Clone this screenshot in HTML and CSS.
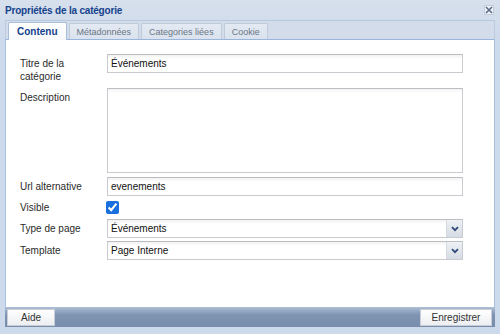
FILE: index.html
```html
<!DOCTYPE html>
<html lang="fr">
<head>
<meta charset="utf-8">
<title>Propriétés de la catégorie</title>
<link rel="stylesheet" href="styles.css">
</head>
<body>
<div class="window">
  <div class="titlebar">
    <span class="title">Propriétés de la catégorie</span>
    <span class="close">
      <svg width="8" height="8" viewBox="0 0 8 8"><path d="M1 1L7 7M7 1L1 7" stroke="#5b6b85" stroke-width="1.6"/></svg>
    </span>
  </div>
  <div class="tabstrip">
    <div class="tab active">Contenu</div>
    <div class="tab">Métadonnées</div>
    <div class="tab">Categories liées</div>
    <div class="tab">Cookie</div>
  </div>
  <div class="panel">
    <div class="row row-title">
      <label class="lbl">Titre de la catégorie</label>
      <div class="field">Événements</div>
    </div>
    <div class="row row-desc">
      <label class="lbl">Description</label>
      <div class="field area"></div>
    </div>
    <div class="row">
      <label class="lbl">Url alternative</label>
      <div class="field">evenements</div>
    </div>
    <div class="row row-check">
      <label class="lbl">Visible</label>
      <input class="check" type="checkbox" checked>
    </div>
    <div class="row">
      <label class="lbl">Type de page</label>
      <div class="field select"><span class="val">Événements</span><span class="arrow"><svg width="8" height="6" viewBox="0 0 8 6"><path d="M1 1.2L4 4.2L7 1.2" fill="none" stroke="#2f4a7a" stroke-width="1.8"/></svg></span></div>
    </div>
    <div class="row">
      <label class="lbl">Template</label>
      <div class="field select"><span class="val">Page Interne</span><span class="arrow"><svg width="8" height="6" viewBox="0 0 8 6"><path d="M1 1.2L4 4.2L7 1.2" fill="none" stroke="#2f4a7a" stroke-width="1.8"/></svg></span></div>
    </div>
  </div>
  <div class="footer">
    <button class="btn btn-help">Aide</button>
    <button class="btn btn-save">Enregistrer</button>
  </div>
</div>
</body>
</html>
```
FILE: styles.css
```css
html, body {
  margin: 0;
  padding: 0;
}
body {
  background: #cddaeb;
  font-family: "Liberation Sans", Arial, sans-serif;
  font-size: 10px;
  color: #2a2a2a;
}
.window {
  width: 500px;
  height: 334px;
  display: flex;
  flex-direction: column;
  background: linear-gradient(#d7e0ec, #cddaeb 40px);
}
.titlebar {
  height: 20px;
  display: flex;
  align-items: center;
  justify-content: space-between;
  padding: 0 6px 0 5px;
  box-sizing: border-box;
}
.title {
  font-weight: bold;
  color: #15428b;
  font-size: 10px;
  letter-spacing: -0.2px;
}
.close {
  width: 10px;
  height: 10px;
  background: #eef2f8;
  border: 1px solid #c3cedd;
  box-sizing: border-box;
  display: flex;
  align-items: center;
  justify-content: center;
}
.tabstrip {
  margin: 0 5px;
  height: 20px;
  box-sizing: border-box;
  padding: 2px 0 0 2px;
  display: flex;
  gap: 2px;
  align-items: flex-end;
  background: #d2dcea;
  border: 1px solid #bccbdf;
  border-bottom: 1px solid #99b5dc;
  border-top: 1px solid #b8c8de;
}
.tab {
  height: 16px;
  box-sizing: border-box;
  padding: 0 7px;
  display: flex;
  align-items: center;
  font-size: 9px;
  color: #6b7585;
  background: linear-gradient(#e4eaf3, #d9e2ed);
  border: 1px solid #bfcbdb;
  border-bottom: none;
  border-radius: 2px 2px 0 0;
}
.tab.active {
  height: 18px;
  margin-bottom: -1px;
  padding: 0 8px;
  font-size: 10px;
  font-weight: bold;
  color: #15428b;
  background: linear-gradient(#ffffff, #f7f9fc);
  border-color: #a9bcd8;
}
.panel {
  margin: 0 5px;
  height: 267px;
  box-sizing: border-box;
  background: #fff;
  border-left: 1px solid #a9c0e0;
  border-right: 1px solid #a9c0e0;
  padding: 14px 0 0 14px;
  display: flex;
  flex-direction: column;
  gap: 3px;
}
.row {
  display: flex;
  align-items: flex-start;
}
.lbl {
  width: 87px;
  flex: none;
  padding-top: 3px;
  line-height: 13px;
  color: #2a2a2a;
}
.row-title {
  height: 31px;
}
.row-title .lbl {
  width: 70px;
  margin-right: 17px;
}
.row-desc {
  margin-bottom: 1px;
}
.row-check {
  height: 17px;
}
.row-check .lbl {
  padding-top: 2px;
}
.field {
  width: 356px;
  height: 19px;
  box-sizing: border-box;
  border: 1px solid #c8cacf;
  border-top-color: #bbbdc3;
  background: linear-gradient(#f2f2f2, #ffffff 4px);
  padding: 0 3px;
  line-height: 17px;
  color: #111;
}
.field.area {
  height: 85px;
}
.check {
  margin: 2px 0 0 -1px;
  width: 13px;
  height: 13px;
  accent-color: #1a6fe0;
}
.select {
  display: flex;
  padding-right: 0;
  justify-content: space-between;
}
.select .arrow {
  width: 15px;
  height: 17px;
  background: linear-gradient(#eef1f5, #d6dce5);
  border-left: 1px solid #d6d9de;
  display: flex;
  align-items: center;
  justify-content: center;
}
.footer {
  margin: 0 5px;
  height: 20px;
  box-sizing: border-box;
  background: linear-gradient(#b0bfd5 0, #9aadc8 3px, #7f94b3 8px, #788dac 100%);
  display: flex;
  justify-content: space-between;
  align-items: flex-end;
  padding: 0 3px 0 2px;
}
.btn {
  height: 17px;
  box-sizing: border-box;
  font-family: "Liberation Sans", Arial, sans-serif;
  font-size: 10px;
  color: #333;
  border: 1px solid #c9ced6;
  background: linear-gradient(#ffffff, #eceef1);
  padding: 0;
  margin-bottom: 1px;
}
.btn-help {
  width: 48px;
}
.btn-save {
  width: 72px;
}
```
